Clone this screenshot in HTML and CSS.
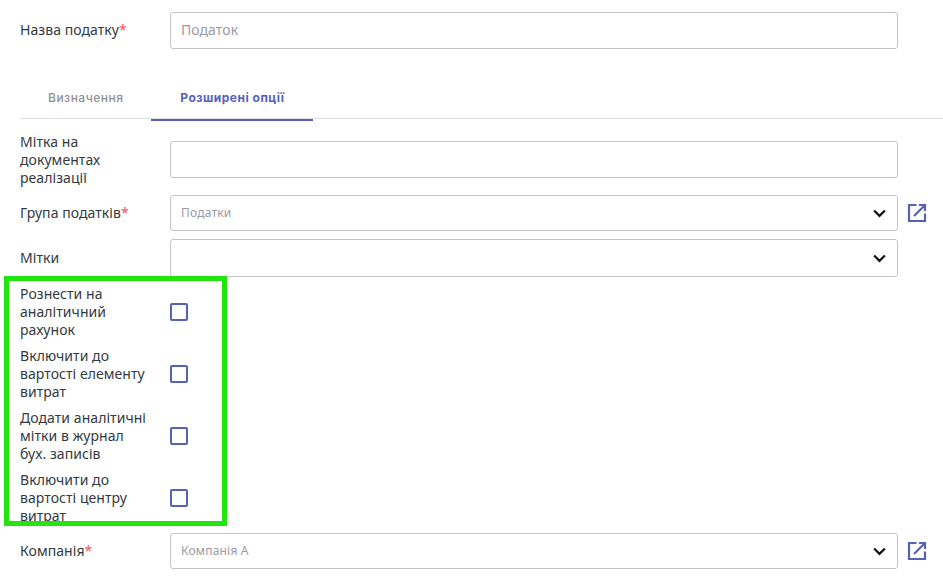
FILE: index.html
```
<!DOCTYPE html>
<html lang="uk">
<head>
<meta charset="utf-8">
<title>Податок</title>
<link rel="stylesheet" href="styles.css">
</head>
<body>
<main class="form">
  <div class="row name-row">
    <label class="label">Назва податку<span class="req">*</span></label>
    <div class="field input big placeholder">Податок</div>
  </div>
  <nav class="tabs">
    <a class="tab">Визначення</a>
    <a class="tab active">Розширені опції</a>
  </nav>
  <div class="row r-mark">
    <label class="label">Мітка на документах реалізації</label>
    <div class="field input h37"></div>
  </div>
  <div class="row r-group">
    <label class="label">Група податків<span class="req">*</span></label>
    <div class="field select placeholder small">Податки
      <svg class="chev" viewBox="0 0 12 8"><path d="M1 1.2l5 5 5-5" fill="none" stroke="#111" stroke-width="2"/></svg>
    </div>
    <svg class="ext" viewBox="0 0 20 20"><path d="M9.500 2H2v16h16v-7.500M12 2h6v6M18 2L7 13" fill="none" stroke="#5561bd" stroke-width="2.200"/></svg>
  </div>
  <div class="row r-tags">
    <label class="label">Мітки</label>
    <div class="field select h38">
      <svg class="chev" viewBox="0 0 12 8"><path d="M1 1.2l5 5 5-5" fill="none" stroke="#111" stroke-width="2"/></svg>
    </div>
  </div>
  <div class="checks">
    <div class="row check-row"><label class="label">Рознести на аналітичний рахунок</label><span class="box"></span></div>
    <div class="row check-row"><label class="label">Включити до вартості елементу витрат</label><span class="box"></span></div>
    <div class="row check-row"><label class="label">Додати аналітичні мітки в журнал бух. записів</label><span class="box"></span></div>
    <div class="row check-row"><label class="label">Включити до вартості центру витрат</label><span class="box"></span></div>
    <div class="highlight"></div>
  </div>
  <div class="row r-company">
    <label class="label">Компанія<span class="req">*</span></label>
    <div class="field select placeholder small">Компанія А
      <svg class="chev" viewBox="0 0 12 8"><path d="M1 1.2l5 5 5-5" fill="none" stroke="#111" stroke-width="2"/></svg>
    </div>
    <svg class="ext" viewBox="0 0 20 20"><path d="M9.500 2H2v16h16v-7.500M12 2h6v6M18 2L7 13" fill="none" stroke="#5561bd" stroke-width="2.200"/></svg>
  </div>
</main>
</body>
</html>
```
FILE: styles.css
```
* { box-sizing: border-box; }
html, body { margin: 0; padding: 0; background: #fff; }
body {
  width: 943px;
  height: 588px;
  overflow: hidden;
  font-family: "Noto Sans", sans-serif;
  font-size: 14px;
  line-height: 18px;
  letter-spacing: 0.06px;
  color: #343a40;
}
.form { padding: 12px 0 0 20px; }
.row { display: flex; align-items: center; }
.label { width: 150px; flex: none; padding-right: 20px; }
.req { color: #f0525b; }
.field {
  width: 728px;
  flex: none;
  border: 1px solid #c4c3ca;
  border-radius: 3px;
  display: flex;
  align-items: center;
  padding: 0 10px;
}
.big { height: 37px; padding-bottom: 1px; }
.name-row .label { margin-bottom: 1px; }
.h37 { height: 37px; margin-bottom: 1px; }
.select { height: 36px; justify-content: space-between; padding-right: 11px; }
.h38.select { height: 38px; }
.placeholder { color: #9b9aa3; }
.small { font-size: 12px; letter-spacing: 0.2px; }
.chev { width: 13px; height: 9px; display: block; margin-left: auto; }
.ext { width: 20px; height: 20px; margin-left: 9px; flex: none; }
.name-row { margin-bottom: 27px; }
.tabs {
  display: flex;
  height: 43px;
  border-bottom: 1px solid #dedee2;
}
.tab {
  height: 44px;
  flex: none;
  padding: 0 28px 1px;
  display: flex;
  align-items: center;
  font-family: "Inter", sans-serif;
  font-size: 12px;
  font-weight: 500;
  letter-spacing: 0.5px;
  color: #8f8f98;
}
.tab.active {
  width: 162px;
  height: 45px;
  padding-bottom: 0;
  justify-content: center;
  font-weight: 700;
  color: #5561bd;
  border-bottom: 2px solid #5561bd;
}
.r-mark { margin-top: 14px; height: 54px; }
.r-group { margin-top: 8px; height: 36px; }
.r-tags { margin-top: 8px; height: 38px; }
.checks { position: relative; margin-top: 8px; display: flex; flex-direction: column; gap: 8px; }
.check-row { height: 54px; }
.box {
  width: 18px;
  height: 18px;
  border: 2px solid #5561bd;
  border-radius: 2px;
  display: block;
}
.highlight {
  position: absolute;
  left: -16px;
  top: -9px;
  width: 223px;
  height: 250px;
  border: 5px solid #22e50e;
  pointer-events: none;
}
.r-company { margin-top: 8px; height: 36px; }
```
